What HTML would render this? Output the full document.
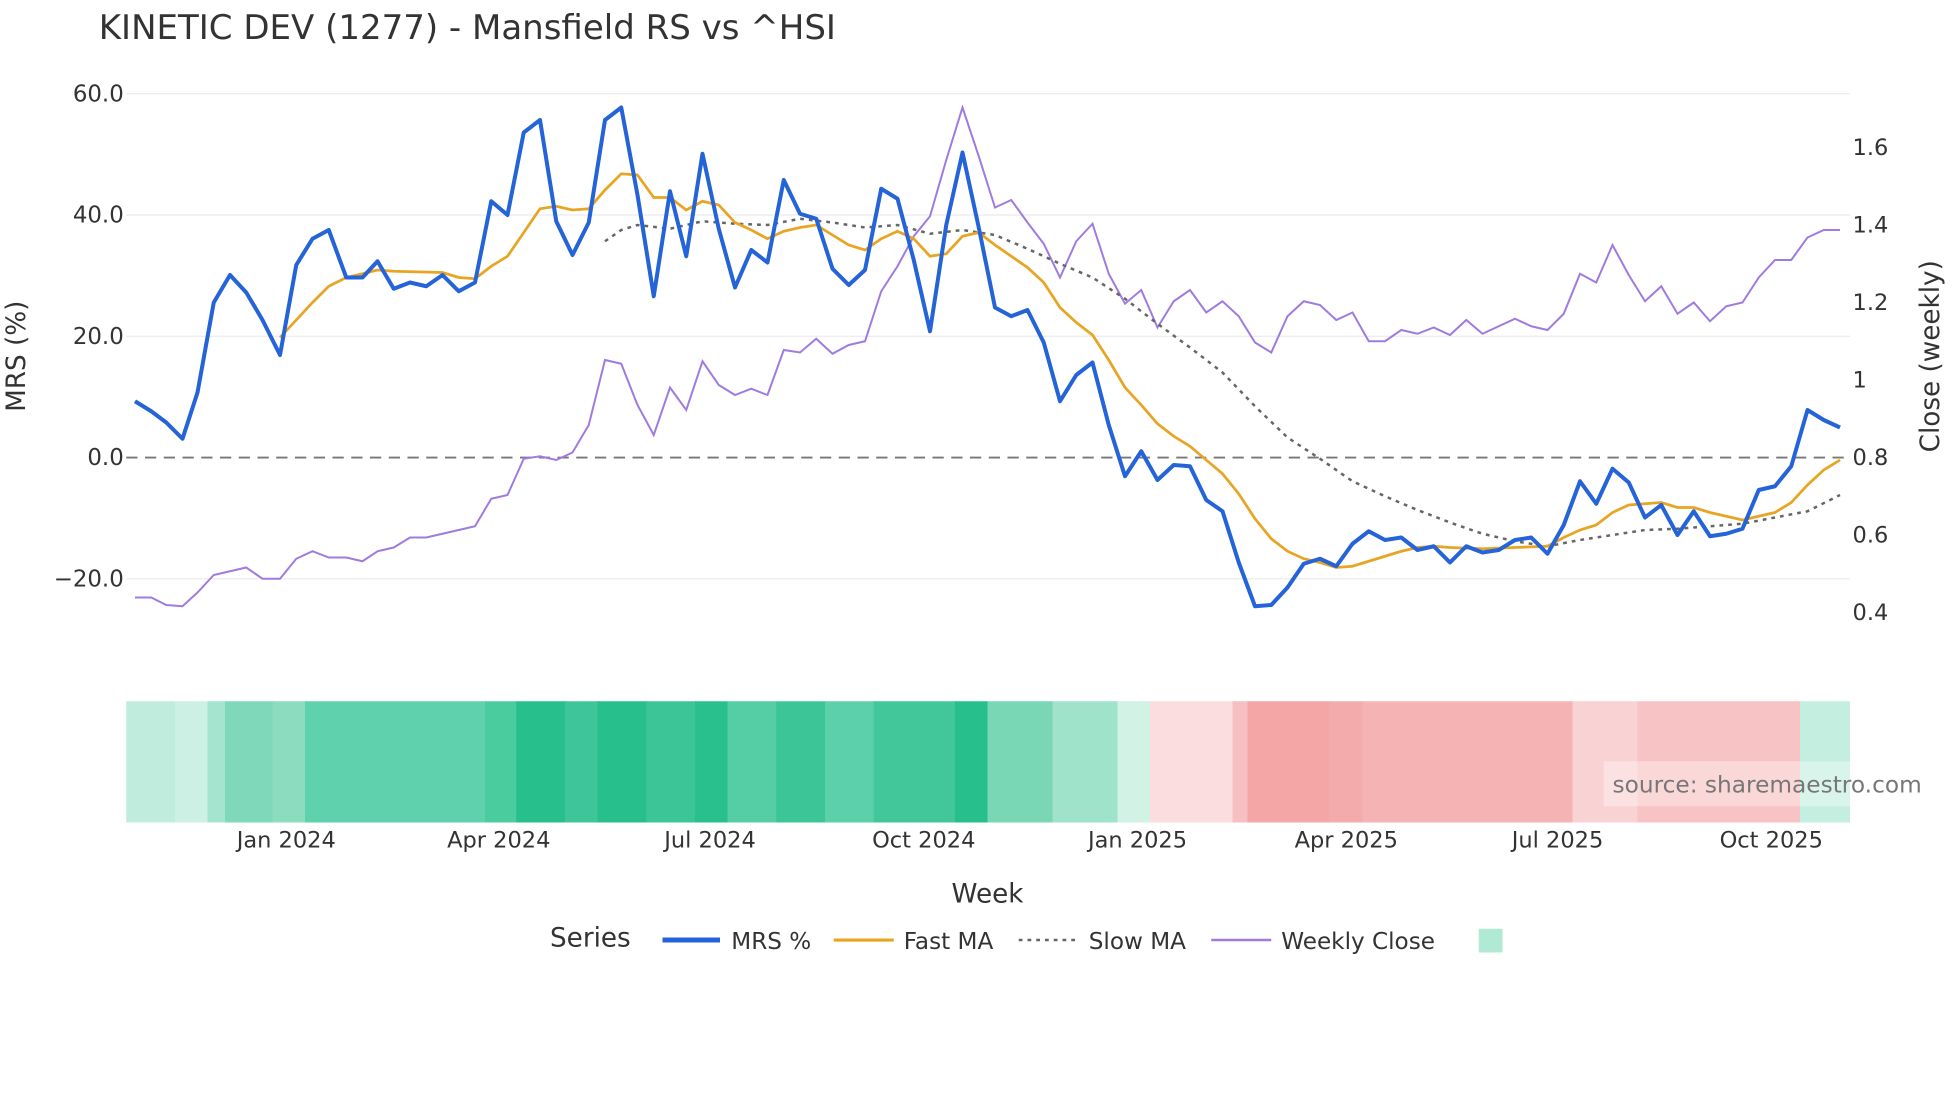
<!DOCTYPE html>
<html><head><meta charset="utf-8"><style>html,body{margin:0;padding:0;background:#fff}svg{display:block}</style></head>
<body>
<svg width="1960" height="1102" viewBox="0 0 1568 881.6" preserveAspectRatio="none" xmlns="http://www.w3.org/2000/svg" font-family="DejaVu Sans, Liberation Sans, sans-serif">
<rect width="1568" height="882" fill="#fff"/>
<text x="79" y="31" font-size="27.2" fill="#333">KINETIC DEV (1277) - Mansfield RS vs ^HSI</text>
<g stroke="#ebebf0" stroke-width="1">
<line x1="101" x2="1480" y1="75" y2="75"/><line x1="101" x2="1480" y1="172" y2="172"/><line x1="101" x2="1480" y1="269" y2="269"/><line x1="101" x2="1480" y1="463" y2="463"/>
</g>
<g font-size="18.3" fill="#333" text-anchor="end">
<text x="99" y="81">60.0</text><text x="99" y="178">40.0</text><text x="99" y="275">20.0</text><text x="99" y="372">0.0</text><text x="99" y="469">−20.0</text>
</g>
<g font-size="18" fill="#333">
<text x="1482" y="124">1.6</text><text x="1482" y="186">1.4</text><text x="1482" y="248">1.2</text><text x="1482" y="310">1</text><text x="1482" y="372">0.8</text><text x="1482" y="434">0.6</text><text x="1482" y="496">0.4</text>
</g>
<text transform="translate(20,285) rotate(-90)" font-size="21" fill="#333" text-anchor="middle">MRS (%)</text>
<text transform="translate(1551,285) rotate(-90)" font-size="21" fill="#333" text-anchor="middle">Close (weekly)</text>
<line x1="101" x2="1480" y1="366" y2="366" stroke="#777" stroke-width="1.5" stroke-dasharray="9,6"/>
<polyline fill="none" stroke="#9f7be0" stroke-width="1.6" points="108,478 121,478 133,484 146,485 158,474 171,460 184,457 197,454 210,463 224,463 237,447 250,441 263,446 277,446 290,449 302,441 315,438 328,430 341,430 354,427 367,424 380,421 393,399 406,396 419,367 432,365 445,368 458,362 471,340 484,288 497,291 510,324 523,348 536,310 549,328 562,289 575,308 588,316 601,311 614,316 627,280 640,282 653,271 666,283 679,276 692,273 705,233 718,213 731,189 744,173 757,128 770,86 783,125 796,166 809,160 822,178 835,195 848,222 861,193 874,179 887,219 900,243 913,232 926,262 939,241 952,232 965,250 978,241 991,253 1004,274 1017,282 1030,253 1043,241 1056,244 1069,256 1082,250 1095,273 1108,273 1121,264 1134,267 1147,262 1160,268 1173,256 1186,267 1199,261 1212,255 1225,261 1238,264 1251,251 1264,219 1277,226 1290,196 1303,220 1316,241 1329,229 1342,251 1355,242 1368,257 1381,245 1394,242 1407,222 1420,208 1433,208 1446,190 1459,184 1472,184"/>
<polyline fill="none" stroke="#666" stroke-width="2" stroke-dasharray="3,4" points="484,193 497,184 510,180 536,183 562,177 588,179 614,180 640,175 666,178 692,182 718,180 744,187 770,184 796,188 822,199 848,211 874,222 900,239 926,259 952,278 978,298 1004,325 1030,350 1056,367 1082,385 1108,397 1134,408 1160,418 1186,427 1212,433 1238,437 1264,432 1290,428 1316,424 1342,423 1368,421 1394,419 1420,414 1446,409 1472,396"/>
<polyline fill="none" stroke="#e8a524" stroke-width="2.2" points="224,270 237,256 250,242 263,229 277,222 290,219 302,216 315,217 354,218 367,222 380,223 393,213 406,205 419,186 432,167 445,165 458,168 471,167 484,152 497,139 510,140 523,158 536,158 549,168 562,161 575,164 588,178 601,184 614,191 627,185 640,182 653,180 666,188 679,196 692,200 705,191 718,185 731,191 744,205 757,203 770,189 783,186 796,196 809,205 822,214 835,226 848,246 861,258 874,268 887,288 900,310 913,324 926,339 939,349 952,357 965,368 978,379 991,395 1004,415 1017,431 1030,441 1043,447 1056,450 1069,454 1082,453 1095,449 1108,445 1121,441 1134,438 1147,437 1160,438 1186,439 1212,438 1238,437 1251,430 1264,424 1277,420 1290,410 1303,404 1316,403 1329,402 1342,406 1355,406 1368,410 1381,413 1394,416 1407,413 1420,410 1433,402 1446,388 1459,376 1472,368"/>
<polyline fill="none" stroke="#2563d9" stroke-width="3.2" stroke-linejoin="round" points="108,321 121,329 133,338 146,351 158,314 171,242 184,220 197,234 210,256 224,284 237,212 250,191 263,184 277,222 290,222 302,209 315,231 328,226 341,229 354,220 367,233 380,226 393,161 406,172 419,106 432,96 445,177 458,204 471,178 484,96 497,86 510,156 523,237 536,153 549,205 562,123 575,183 588,230 601,200 614,210 627,144 640,171 653,175 666,215 679,228 692,216 705,151 718,159 731,208 744,265 757,180 770,122 783,182 796,246 809,253 822,248 835,274 848,321 861,300 874,290 887,340 900,381 913,361 926,384 939,372 952,373 965,400 978,409 991,450 1004,485 1017,484 1030,470 1043,451 1056,447 1069,453 1082,435 1095,425 1108,432 1121,430 1134,440 1147,437 1160,450 1173,437 1186,442 1199,440 1212,432 1225,430 1238,443 1251,420 1264,385 1277,403 1290,375 1303,386 1316,414 1329,404 1342,428 1355,409 1368,429 1381,427 1394,423 1407,392 1420,389 1433,373 1446,328 1459,336 1472,342"/>
<g>
<rect x="101" y="561" width="40" height="97" fill="#c0ecdd"/>
<rect x="140" y="561" width="27" height="97" fill="#ccf0e3"/>
<rect x="166" y="561" width="15" height="97" fill="#a5e4cf"/>
<rect x="180" y="561" width="39" height="97" fill="#7fd8b9"/>
<rect x="218" y="561" width="27" height="97" fill="#8cdcbf"/>
<rect x="244" y="561" width="145" height="97" fill="#5fd1ac"/>
<rect x="388" y="561" width="26" height="97" fill="#4bcc9f"/>
<rect x="413" y="561" width="40" height="97" fill="#27bf8c"/>
<rect x="452" y="561" width="27" height="97" fill="#3ec69a"/>
<rect x="478" y="561" width="40" height="97" fill="#27bf8c"/>
<rect x="517" y="561" width="40" height="97" fill="#3cc698"/>
<rect x="556" y="561" width="27" height="97" fill="#29c08d"/>
<rect x="582" y="561" width="40" height="97" fill="#55cea6"/>
<rect x="621" y="561" width="40" height="97" fill="#3cc698"/>
<rect x="660" y="561" width="40" height="97" fill="#5bd0aa"/>
<rect x="699" y="561" width="66" height="97" fill="#41c79a"/>
<rect x="764" y="561" width="27" height="97" fill="#27bf8c"/>
<rect x="790" y="561" width="53" height="97" fill="#79d7b6"/>
<rect x="842" y="561" width="53" height="97" fill="#a0e3cb"/>
<rect x="894" y="561" width="27" height="97" fill="#d2f2e6"/>
<rect x="920" y="561" width="67" height="97" fill="#fbdde0"/>
<rect x="986" y="561" width="13" height="97" fill="#f6c0c3"/>
<rect x="998" y="561" width="66" height="97" fill="#f4a5a6"/>
<rect x="1063" y="561" width="28" height="97" fill="#f4abac"/>
<rect x="1090" y="561" width="169" height="97" fill="#f6b3b4"/>
<rect x="1258" y="561" width="53" height="97" fill="#f9d2d3"/>
<rect x="1310" y="561" width="131" height="97" fill="#f8c3c4"/>
<rect x="1440" y="561" width="40" height="97" fill="#c4efe0"/>
</g>
<rect x="1283" y="609" width="265" height="36" fill="#fff" fill-opacity="0.35"/>
<text x="1290" y="634" font-size="18.6" fill="#777">source: sharemaestro.com</text>
<g font-size="18" fill="#333" text-anchor="middle">
<text x="229" y="678">Jan 2024</text><text x="399" y="678">Apr 2024</text><text x="568" y="678">Jul 2024</text><text x="739" y="678">Oct 2024</text><text x="910" y="678">Jan 2025</text><text x="1077" y="678">Apr 2025</text><text x="1246" y="678">Jul 2025</text><text x="1417" y="678">Oct 2025</text>
</g>
<text x="790" y="722" font-size="21" fill="#333" text-anchor="middle">Week</text>
<text x="440" y="757" font-size="21" fill="#333">Series</text>
<line x1="530" x2="576" y1="752" y2="752" stroke="#2563d9" stroke-width="4"/>
<text x="585" y="759" font-size="18.5" fill="#333">MRS %</text>
<line x1="667" x2="715" y1="752" y2="752" stroke="#e8a524" stroke-width="2.5"/>
<text x="723" y="759" font-size="18.5" fill="#333">Fast MA</text>
<line x1="815" x2="860" y1="752" y2="752" stroke="#666" stroke-width="2" stroke-dasharray="3,4"/>
<text x="871" y="759" font-size="18.5" fill="#333">Slow MA</text>
<line x1="969" x2="1017" y1="752" y2="752" stroke="#9f7be0" stroke-width="2"/>
<text x="1025" y="759" font-size="18.5" fill="#333">Weekly Close</text>
<rect x="1183" y="743" width="19" height="19" fill="#b0ead4"/>
</svg>
</body></html>
